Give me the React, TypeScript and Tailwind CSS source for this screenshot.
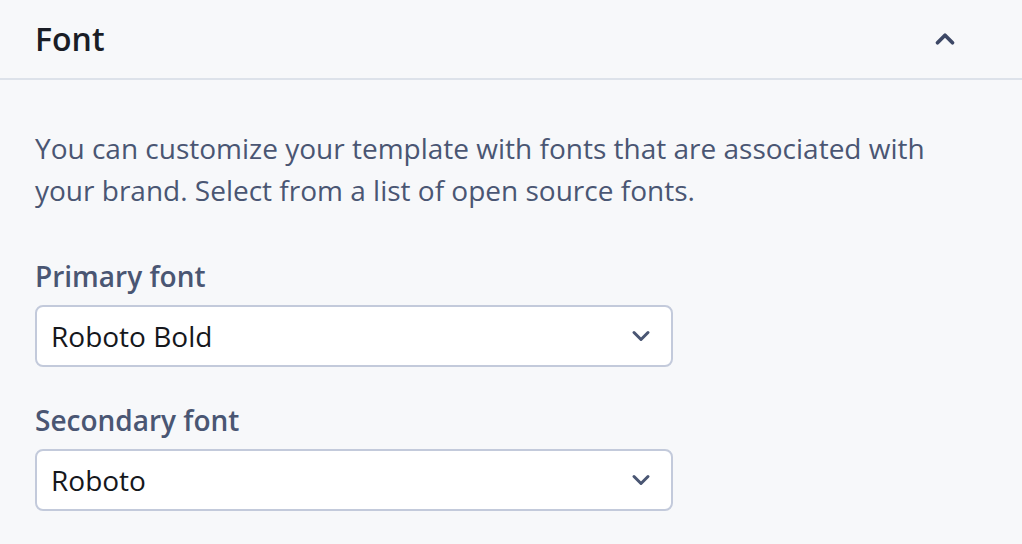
import { ChevronDown, ChevronUp } from 'lucide-react';

const fonts = ['Roboto Bold', 'Roboto'];

function FontSelect({ label, value }: { label: string; value: string }) {
  return (
    <div className="flex flex-col gap-2">
      <label className="text-[28px] leading-[42px] font-semibold text-[#4a5673]">{label}</label>
      <div className="w-[638px] h-[62px] flex items-center justify-between pl-[14px] pr-[16px] bg-white border-2 border-[#c3cadb] rounded-[8px]">
        <span className="text-[28px] text-[#15171c]">{value}</span>
        <ChevronDown className="w-[28px] h-[28px] text-[#4a5673]" strokeWidth={2.6} />
      </div>
    </div>
  );
}

export default function App() {
  return (
    <div className="w-[1022px] h-[544px] bg-[#f7f8fa] overflow-hidden" style={{ fontFamily: '"Open Sans", "Noto Sans", sans-serif' }}>
      {/* Header */}
      <div className="h-[80px] flex items-center justify-between pl-[35px] pr-[62px] border-b-2 border-[#dde2ea]">
        <h2 className="text-[32px] font-semibold text-[#1a1d26]">Font</h2>
        <ChevronUp className="w-[30px] h-[30px] text-[#3d4866]" strokeWidth={3} />
      </div>

      {/* Body */}
      <div className="px-[35px] pt-[47px]">
        <p className="max-w-[930px] text-[28px] leading-[42px] text-[#4a5673]">
          You can customize your template with fonts that are associated with your brand. Select from a list of open source fonts.
        </p>
        <div className="mt-[44px] flex flex-col gap-[32px]">
          <FontSelect label="Primary font" value={fonts[0]} />
          <FontSelect label="Secondary font" value={fonts[1]} />
        </div>
      </div>
    </div>
  );
}
